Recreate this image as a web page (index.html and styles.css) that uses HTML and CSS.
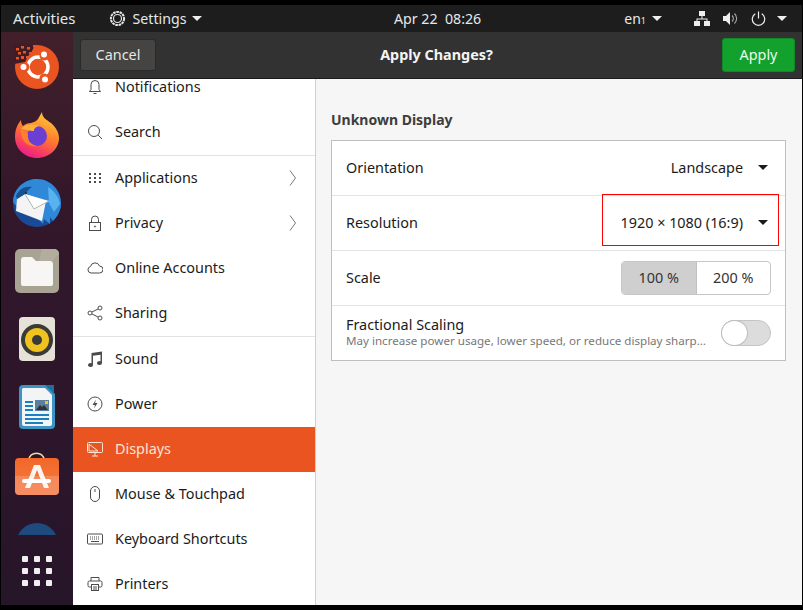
FILE: index.html
```html
<!DOCTYPE html>
<html lang="en">
<head>
    <meta charset="UTF-8">
    <title>Settings</title>
    <link rel="stylesheet" href="styles.css">
</head>
<body>
    <div id="screen">
        <header id="topbar">
            <div class="top-left">
                <span class="top-activities">Activities</span>
                <span class="top-app">
                    <svg width="17" height="17" viewBox="0 0 17 17" fill="none" stroke="#e6e6e6"><circle cx="8.5" cy="8.5" r="6.6" stroke-width="2" stroke-dasharray="2.6 .7"/><circle cx="8.5" cy="8.5" r="4" stroke-width="1.2"/></svg>
                    Settings
                    <i class="caret-white"></i>
                </span>
            </div>
            <span class="top-clock">Apr 22&nbsp;&nbsp;08:26</span>
            <div class="top-tray">
                <span class="top-lang">en<small>1</small></span>
                <i class="caret-white caret-lang"></i>
                <svg class="tray-net" width="16" height="15" viewBox="0 0 16 15" fill="#eee"><rect x="5" y="0" width="6" height="5"/><rect x="0" y="10" width="6" height="5"/><rect x="10" y="10" width="6" height="5"/><path d="M7.5 5h1v2.500h5V10h-1V8.500h-9V10h-1V7.500h5z"/></svg>
                <svg class="tray-vol" width="15" height="15" viewBox="0 0 15 15"><path d="M0 5h3l4-4v13l-4-4H0z" fill="#eee"/><path d="M9 4.500a4 4 0 0 1 0 6M11.500 2.500a7 7 0 0 1 0 10" fill="none" stroke="#aaa" stroke-width="1.100"/></svg>
                <svg class="tray-pow" width="15" height="15" viewBox="0 0 15 15" fill="none" stroke="#eee" stroke-width="1.200"><path d="M4.300 2.800a6.200 6.200 0 1 0 6.400 0M7.500 .5v7"/></svg>
                <i class="caret-white"></i>
            </div>
        </header>
        <div id="desk">
            <nav id="dock">
                <div class="dock-list">
                    <div class="dock-item">
                        <svg width="46" height="46" viewBox="0 0 46 46"><circle cx="23" cy="23" r="22" fill="#e95420"/><path d="M0 0h18l2 3-3 6-3 3-3 6-11 2z" fill="#3f1d27"/><g fill="#e95420"><rect x="2" y="4" width="3" height="2.500"/><rect x="7" y="2" width="3" height="2.500"/><rect x="13" y="3" width="3" height="2.500"/><rect x="4" y="8" width="3" height="2.500"/><rect x="9" y="7" width="3" height="2.500"/><rect x="15" y="8" width="3" height="2.500"/><rect x="2" y="13" width="3" height="2.500"/><rect x="7" y="12" width="3" height="3"/><rect x="12" y="12" width="3" height="2.500"/><rect x="19" y="1" width="3" height="2.500"/></g><circle cx="24" cy="23" r="10" fill="none" stroke="#fff" stroke-width="3.500"/><g fill="#e95420"><circle cx="11" cy="23" r="4.500"/><circle cx="30" cy="12" r="4.500"/><circle cx="30" cy="34" r="4.500"/></g><g fill="#fff"><circle cx="9.500" cy="23" r="3"/><circle cx="30" cy="10.500" r="3"/><circle cx="31" cy="35.500" r="3"/></g></svg>
                    </div>
                    <div class="dock-item">
                        <svg width="46" height="48" viewBox="0 0 46 48"><defs><linearGradient id="fx" x1="0.800" y1="0" x2="0.350" y2="1"><stop offset="0" stop-color="#ffd53a"/><stop offset=".5" stop-color="#ff7a2e"/><stop offset=".85" stop-color="#f5356a"/><stop offset="1" stop-color="#e81f8c"/></linearGradient></defs><path d="M28 1c0 6 5 8 9 11 6 5 8 11 8 15 0 11-10 20-22 20S1 38 1 26c0-7 2-12 6-17 0 3 1 5 2 6 2-2 5-3 8-3 3-1 6-2 7-4z" fill="url(#fx)"/><circle cx="23" cy="25" r="10" fill="#6b3fd4"/><path d="M7 18c3-4 9-6 18-3-4 1-5 3-5 5-4 0-7-1-13-2z" fill="#ffb13a"/><path d="M7 18c-1 9 5 19 16 17-6-1-10-6-9-12z" fill="#ff7f2a"/></svg>
                    </div>
                    <div class="dock-item">
                        <svg width="50" height="48" viewBox="0 0 50 48"><circle cx="25" cy="24" r="24" fill="#1a4a96"/><path d="M1 22C2 8 14 0 25 0c13 0 24 11 24 24 0 7-3 13-8 18l-3-4v7l-6-5-1 5-8-8L10 30C6 28 2 26 1 22z" fill="#2f88d8"/><path d="M36 8c6 4 11 10 12 17l-6 8-5-9z" fill="#58b2ee"/><path d="M5 20l8-5 21 7-4 20-26-10z" fill="#f4f4f4"/><path d="M13 15l9 15 15-8" fill="#fff" stroke="#b4b4b4"/><path d="M4 17C7 10 13 7 20 8c-3 2-5 4-7 7l-8 5z" fill="#16508f"/><circle cx="14" cy="14" r="1" fill="#222"/></svg>
                    </div>
                    <div class="dock-item">
                        <svg width="46" height="46" viewBox="0 0 46 46"><rect x="1" y="1" width="44" height="44" rx="5" fill="#a8a392"/><path d="M28 1h12a5 5 0 0 1 5 5v0L20 32z" fill="#b2ad9d"/><path d="M7 12a3 3 0 0 1 3-3h8l4 4h14a3 3 0 0 1 3 3v20a2 2 0 0 1-2 2H9a2 2 0 0 1-2-2z" fill="#f7f6f5"/></svg>
                    </div>
                    <div class="dock-item">
                        <svg width="38" height="46" viewBox="0 0 38 46"><rect x="1" y="1" width="36" height="44" rx="4" fill="#e6e2d8"/><circle cx="19" cy="24" r="16" fill="#3a3a36"/><circle cx="19" cy="24" r="12" fill="#f0c21f"/><circle cx="19" cy="24" r="5" fill="#3a3a36"/></svg>
                    </div>
                    <div class="dock-item">
                        <svg width="38" height="46" viewBox="0 0 38 46"><path d="M5 1h23l9 9v31a4 4 0 0 1-4 4H5a4 4 0 0 1-4-4V5a4 4 0 0 1 4-4z" fill="#3c94c4"/><path d="M5 4h22l7 7v29a2 2 0 0 1-2 2H6a2 2 0 0 1-2-2V5z" fill="#f2f4f6"/><path d="M27 1h9v9z" fill="#1f6f9f"/><g fill="#1c7fc0"><rect x="7" y="17" width="8" height="2"/><rect x="7" y="21" width="8" height="2"/><rect x="7" y="25" width="8" height="2"/><rect x="7" y="30" width="24" height="2"/><rect x="7" y="34" width="24" height="2"/><rect x="7" y="38" width="18" height="2"/></g><rect x="17" y="16" width="14" height="11" fill="#5b7f9c"/><path d="M18 26l4-5 2 2 2-2 4 5z" fill="#333"/><rect x="27" y="17" width="3" height="3" fill="#f5c518"/></svg>
                    </div>
                    <div class="dock-item">
                        <svg width="46" height="46" viewBox="0 0 46 46"><defs><linearGradient id="bag" x1="0" y1="0" x2="0" y2="1"><stop offset="0" stop-color="#f2672a"/><stop offset=".49" stop-color="#f37235"/><stop offset=".5" stop-color="#f5885a"/><stop offset="1" stop-color="#f58e62"/></linearGradient></defs><path d="M15 8c0-9 15-9 15 0" fill="none" stroke="#f4d9a8" stroke-width="1.500"/><rect x="1" y="6" width="44" height="37" rx="4" fill="url(#bag)"/><path d="M20 13h6l9 23h-5l-7-18-7 18h-5z" fill="#fff" opacity=".92"/><rect x="8" y="27" width="29" height="4" rx="2" fill="#fff"/></svg>
                    </div>
                    <div class="dock-item">
                        <svg width="46" height="46" viewBox="0 0 46 46"><circle cx="23" cy="24" r="21" fill="#1f4a7d"/><circle cx="23" cy="24" r="7" fill="#4f4a55"/></svg>
                    </div>
                </div>
                <div class="dock-apps">
                    <i></i><i></i><i></i><i></i><i></i><i></i><i></i><i></i><i></i>
                </div>
            </nav>
            <div id="window">
                <header id="headerbar">
                    <button class="btn-cancel">Cancel</button>
                    <h1>Apply Changes?</h1>
                    <button class="btn-apply">Apply</button>
                </header>
                <div id="panes">
                    <aside id="sidebar">
                        <ul class="side-list side-first">
                            <li><svg viewBox="0 0 16 16"><path d="M8 1.500a4 4 0 0 1 4 4v5l1.500 2h-11l1.500-2v-5a4 4 0 0 1 4-4zM6.500 14.500h3"/></svg>Notifications</li>
                            <li><svg viewBox="0 0 16 16"><circle cx="7" cy="7" r="5.500"/><path d="M11 11l4 4"/></svg>Search</li>
                        </ul>
                        <ul class="side-list">
                            <li><svg viewBox="0 0 16 16" class="solid"><rect x="2" y="3" width="2" height="2"/><rect x="7" y="3" width="2" height="2"/><rect x="12" y="3" width="2" height="2"/><rect x="2" y="7" width="2" height="2"/><rect x="7" y="7" width="2" height="2"/><rect x="12" y="7" width="2" height="2"/><rect x="2" y="11" width="2" height="2"/><rect x="7" y="11" width="2" height="2"/><rect x="12" y="11" width="2" height="2"/></svg>Applications<svg class="chev" viewBox="0 0 8 16"><path d="M1 .5l5.500 7.500L1 15.500"/></svg></li>
                            <li><svg viewBox="0 0 16 16"><rect x="2.500" y="7.500" width="11" height="8"/><path d="M4.500 7.500V4.500a3.500 3.500 0 0 1 7 0v3"/><circle cx="8" cy="11.500" r=".6"/></svg>Privacy<svg class="chev" viewBox="0 0 8 16"><path d="M1 .5l5.500 7.500L1 15.500"/></svg></li>
                            <li><svg viewBox="0 0 16 16"><path d="M4 13a3.300 3.300 0 0 1-.5-6.500A4.700 4.700 0 0 1 12.500 6 3.500 3.500 0 0 1 12.500 13z"/></svg>Online Accounts</li>
                            <li><svg viewBox="0 0 16 16"><circle cx="3" cy="8" r="2"/><circle cx="13" cy="3" r="2"/><circle cx="13" cy="13" r="2"/><path d="M5 7l6-3M5 9l6 3"/></svg>Sharing</li>
                        </ul>
                        <ul class="side-list">
                            <li><svg viewBox="0 0 16 16" class="solid"><path d="M4.500 2L15 .5V12a2.500 2 0 1 1-1.500-1.800V3.800L6 4.800V14a2.500 2 0 1 1-1.500-1.800z"/></svg>Sound</li>
                            <li><svg viewBox="0 0 16 16"><circle cx="8" cy="8" r="7"/><path class="fill" d="M9 3.500L5.500 9H8l-1 3.500L10.500 7H8z"/></svg>Power</li>
                            <li class="active"><svg viewBox="0 0 16 16"><rect x=".5" y="1.500" width="15" height="10" rx="1"/><path d="M2 3l9 7M2 3v7h9M5 15h6M8 12v3"/></svg>Displays</li>
                            <li><svg viewBox="0 0 16 16"><rect x="3.500" y=".5" width="9" height="15" rx="4.500"/><path d="M8 3v3"/></svg>Mouse &amp; Touchpad</li>
                            <li><svg viewBox="0 0 16 16"><rect x=".5" y="3" width="15" height="10" rx="1"/><path d="M3 6h10M3 8h10" stroke-dasharray="1 1"/><path d="M4 10.500h8"/></svg>Keyboard Shortcuts</li>
                            <li><svg viewBox="0 0 16 16"><path d="M4 5V1.500h8V5M4 11H2.500A1.500 1.500 0 0 1 1 9.500V6.500A1.500 1.500 0 0 1 2.500 5h11A1.500 1.500 0 0 1 15 6.500v3a1.500 1.500 0 0 1-1.500 1.500H12"/><rect x="4.500" y="8.500" width="7" height="6"/><path d="M6 11h4M6 13h4"/></svg>Printers</li>
                        </ul>
                    </aside>
                    <main id="content">
                        <h2>Unknown Display</h2>
                        <section class="card">
                            <div class="row">
                                <span>Orientation</span>
                                <span class="combo">Landscape<i class="caret-dark"></i></span>
                            </div>
                            <div class="row">
                                <span>Resolution</span>
                                <span class="combo">1920 × 1080 (16:9)<i class="caret-dark"></i></span>
                                <div class="red-box"></div>
                            </div>
                            <div class="row">
                                <span>Scale</span>
                                <div class="scale">
                                    <span class="scale-on">100 %</span>
                                    <span>200 %</span>
                                </div>
                            </div>
                            <div class="row row-last">
                                <div class="frac">
                                    <div>Fractional Scaling</div>
                                    <div class="frac-sub">May increase power usage, lower speed, or reduce display sharp…</div>
                                </div>
                                <div class="switch"><i></i></div>
                            </div>
                        </section>
                    </main>
                </div>
            </div>
        </div>
    </div>
</body>
</html>
```

FILE: styles.css
```css
*{
    margin: 0;
    padding: 0;
    box-sizing: border-box;
}
html, body{
    width: 803px;
    height: 610px;
    overflow: hidden;
    background-color: #000;
    font-family: "Noto Sans", sans-serif;
    font-size: 14.4px;
}
#screen{
    height: 610px;
    padding: 5px 1px 5px 1px;
    display: flex;
    flex-direction: column;
}
ul{
    list-style: none;
}

/* barra de cima */
#topbar{
    height: 27px;
    flex: none;
    padding-bottom: 1px;
    background-color: #1d1d1d;
    color: #e4e8ea;
    font-size: 14.2px;
    display: flex;
    align-items: center;
}
.top-left{
    width: 393px;
    flex: none;
    display: flex;
    align-items: center;
}
.top-activities{
    margin-left: 12px;
    font-size: 15px;
}
.top-app{
    margin-left: 33px;
    display: flex;
    align-items: center;
    gap: 6px;
}
.top-app svg{
    margin-right: 1px;
}
.top-tray{
    margin-left: auto;
    margin-right: 15px;
    display: flex;
    align-items: center;
}
.top-lang{
    font-size: 14px;
}
.top-lang small{
    font-size: 9px;
}
.caret-white{
    display: inline-block;
    width: 0;
    height: 0;
    border-left: 5px solid transparent;
    border-right: 5px solid transparent;
    border-top: 5px solid #eee;
}
.caret-lang{
    margin-left: 6px;
}
.tray-net{
    margin-left: 32px;
}
.tray-vol{
    margin-left: 13px;
}
.tray-pow{
    margin-left: 13px;
    margin-right: 11px;
}

/* dock */
#desk{
    flex: 1;
    display: flex;
    min-height: 0;
}
#dock{
    width: 72px;
    flex: none;
    background: linear-gradient(#42202a, #33172a 30%, #27152a);
    display: flex;
    flex-direction: column;
}
.dock-list{
    height: 503px;
    padding-top: 1px;
    overflow: hidden;
}
.dock-item{
    height: 68px;
    display: flex;
    align-items: center;
    justify-content: center;
}
.dock-apps{
    width: 30px;
    margin: 21px 0 0 21px;
    display: grid;
    grid-template-columns: repeat(3, 6px);
    gap: 6px;
}
.dock-apps i{
    height: 6px;
    border-radius: 1px;
    background-color: #f0f0f0;
}

/* janela */
#window{
    flex: 1;
    display: flex;
    flex-direction: column;
    min-width: 0;
}
#headerbar{
    height: 47px;
    flex: none;
    padding: 0 7px;
    background-color: #333232;
    border-bottom: 1px solid #1a1a1a;
    display: flex;
    align-items: center;
    justify-content: space-between;
}
#headerbar h1{
    font-size: 14.4px;
    font-weight: 700;
    color: #f4f4f4;
    margin: 0 5px 2px 0;
}
#headerbar button{
    font: inherit;
    border-radius: 3px;
    padding-bottom: 2px;
}
.btn-cancel{
    width: 76px;
    height: 32px;
    background-color: #454443;
    border: 1px solid #2a2a2a;
    color: #e6e6e6;
}
.btn-apply{
    width: 73px;
    height: 34px;
    background-color: #12a12d;
    border: 1px solid #0f8a26;
    color: #eafbe9;
}
#panes{
    flex: 1;
    display: flex;
    min-height: 0;
}

/* lista da esquerda */
#sidebar{
    width: 243px;
    flex: none;
    overflow: hidden;
    background-color: #fff;
    border-right: 1px solid #cfcfcf;
    color: #1b1b1b;
}
.side-list{
    border-bottom: 1px solid #e2e2e2;
}
.side-first{
    margin-top: -14px;
}
.side-list li{
    height: 45px;
    line-height: 14px;
    padding: 0 0 2px 14px;
    display: flex;
    align-items: center;
    gap: 12px;
}
.side-list svg{
    width: 16px;
    height: 16px;
    flex: none;
    fill: none;
    stroke: #4c4c4c;
    stroke-width: 1;
}
.side-list svg.solid{
    fill: #4c4c4c;
    stroke: none;
}
.side-list svg .fill{
    fill: #4c4c4c;
    stroke: none;
}
.side-list svg.chev{
    width: 8px;
    margin-left: auto;
    margin-right: 18px;
    stroke: #777;
}
.side-list li.active{
    background-color: #e95420;
    color: #fbe3d8;
}
.side-list li.active svg{
    stroke: #fbe3d8;
}

/* conteudo */
#content{
    flex: 1;
    min-width: 0;
    padding: 31px 16px 0 15px;
    background-color: #f6f6f6;
    color: #1b1b1b;
}
#content h2{
    font-size: 14px;
    line-height: 19px;
    font-weight: 700;
    color: #3d3d3d;
    margin-bottom: 11px;
}
.card{
    background-color: #fff;
    border: 1px solid #bfbfbf;
}
.row{
    height: 55px;
    padding: 0 14px;
    border-bottom: 1px solid #e4e4e4;
    display: flex;
    align-items: center;
    justify-content: space-between;
    position: relative;
}
.row > span{
    margin-top: -2px;
}
.row-last{
    height: 54px;
    border-bottom: 0;
}
.combo{
    display: flex;
    align-items: center;
    gap: 15px;
    margin-right: 3px;
}
.caret-dark{
    display: inline-block;
    width: 0;
    height: 0;
    border-left: 5px solid transparent;
    border-right: 5px solid transparent;
    border-top: 5px solid #1b1b1b;
}
.red-box{
    position: absolute;
    left: 270px;
    top: -2px;
    width: 177px;
    height: 52px;
    border: 1px solid #f00;
}
.scale{
    width: 150px;
    height: 34px;
    border: 1px solid #c6c6c6;
    border-radius: 4px;
    display: flex;
    overflow: hidden;
    color: #333;
}
.scale span{
    flex: 1;
    padding-bottom: 2px;
    display: flex;
    align-items: center;
    justify-content: center;
}
.scale .scale-on{
    background-color: #cfcfcf;
    border-right: 1px solid #c0c0c0;
}
.frac{
    line-height: 16px;
    margin-top: -2px;
}
.frac-sub{
    font-size: 11.6px;
    line-height: 15px;
    color: #777;
}
.switch{
    width: 50px;
    height: 26px;
    flex: none;
    border-radius: 13px;
    border: 1px solid #c4c4c4;
    background-color: #dcdcdc;
}
.switch i{
    display: block;
    width: 25px;
    height: 24px;
    border-radius: 50%;
    background-color: #fff;
    box-shadow: 0 0 0 1px #bdbdbd;
}
```
